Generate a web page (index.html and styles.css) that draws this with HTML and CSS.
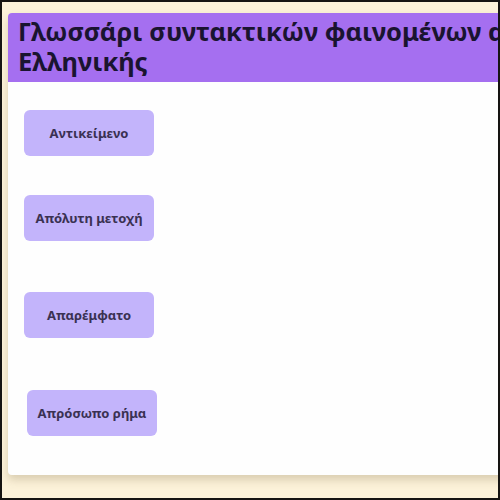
FILE: index.html
```html
<!DOCTYPE html>
<html lang="el">
<head>
<meta charset="utf-8">
<title>Γλωσσάρι</title>
<link rel="stylesheet" href="styles.css">
</head>
<body>
<div class="frame">
  <div class="card">
    <header class="header">
      <h1 class="title">Γλωσσάρι συντακτικών φαινομένων αρχαίας Ελληνικής</h1>
    </header>
    <div class="list">
      <button class="term">Αντικείμενο</button>
      <button class="term">Απόλυτη μετοχή</button>
      <button class="term">Απαρέμφατο</button>
      <button class="term">Απρόσωπο ρήμα</button>
    </div>
  </div>
</div>
</body>
</html>
```
FILE: styles.css
```css
html, body {
  margin: 0;
  padding: 0;
}
body {
  width: 500px;
  height: 500px;
  font-family: "Noto Sans", "DejaVu Sans", sans-serif;
}
.frame {
  width: 500px;
  height: 500px;
  box-sizing: border-box;
  border: 2px solid #161412;
  background: #fcf2d9;
  overflow: hidden;
  padding: 11px 0 0 6px;
}
.card {
  width: 670px;
  height: 462px;
  background: #fefefe;
  border-radius: 4px;
  box-shadow: 0 5px 8px rgba(120, 100, 60, 0.25);
  overflow: hidden;
}
.header {
  background: #a56ff0;
  padding: 3px 10px 6px;
}
.title {
  margin: 0;
  font-size: 25.5px;
  line-height: 30px;
  font-weight: 700;
  color: #1a1430;
}
.list {
  display: flex;
  flex-direction: column;
  align-items: flex-start;
  padding: 28px 0 0 16px;
}
.term {
  width: 130px;
  height: 46px;
  border: none;
  border-radius: 6px;
  background: #c3b4fb;
  color: #3a3152;
  font-family: "Noto Sans", "DejaVu Sans", sans-serif;
  font-size: 13px;
  font-weight: 700;
  padding: 0;
}
.term:nth-child(2) { margin-top: 39px; }
.term:nth-child(3) { margin-top: 51px; }
.term:nth-child(4) { margin-top: 52px; margin-left: 3px; }
```
